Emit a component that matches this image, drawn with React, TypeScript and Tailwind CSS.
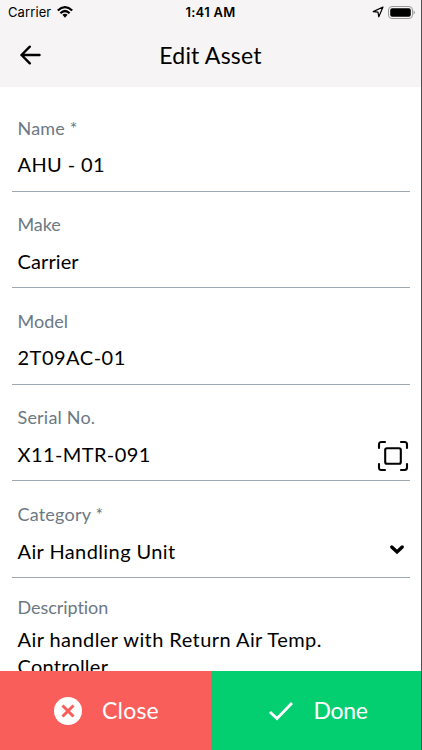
import type { ReactNode } from "react";

type FieldProps = {
  label: string;
  value: string;
  labelClass: string;
  valueClass: string;
  icon?: ReactNode;
};

function Field({ label, value, labelClass, valueClass, icon }: FieldProps) {
  return (
    <div className="h-[96.6px] shrink-0 border-b border-[#9da9b2] pl-1.5 pt-[20.500px]">
      <div className={`h-6 text-[18px] leading-6 text-[#6c7883] ${labelClass}`}>{label}</div>
      <div className="mt-[10.800px] flex h-7 items-center justify-between">
        <span className={`whitespace-nowrap text-[20px] leading-7 text-black ${valueClass}`}>{value}</span>
        {icon}
      </div>
    </div>
  );
}

function ScanIcon() {
  return (
    <svg className="mr-px mt-[3px] h-8 w-8 shrink-0" viewBox="0 0 32 32" fill="none" stroke="black" strokeWidth="2.1" strokeLinecap="round" strokeLinejoin="round">
      <path d="M2 8V4.5Q2 2 4.5 2H8M24 2h3.5Q30 2 30 4.5V8M30 24v3.500Q30 30 27.500 30H24M8 30H4.500Q2 30 2 27.500V24" />
      <rect x="8.200" y="8.200" width="15.600" height="15.600" rx="1.800" />
    </svg>
  );
}

function ChevronIcon() {
  return (
    <svg className="mr-[5px] h-4 w-4 shrink-0" viewBox="0 0 16 16" fill="none" stroke="black" strokeWidth="3.400" strokeLinecap="round" strokeLinejoin="miter">
      <path d="M2.800 4L8 9L13.200 4" />
    </svg>
  );
}

function StatusBar() {
  return (
    <div className="grid h-6 grid-cols-3 items-center font-['Inter',sans-serif] text-[13px] leading-6 text-black">
      <div className="flex items-center gap-[6px] pl-2">
        <span className="tracking-[0.1px]">Carrier</span>
        <svg className="h-3 w-4" viewBox="0 0 16 12" fill="none" stroke="black" strokeWidth="2.200">
          <path d="M0.800 4.500Q8-2.200 15.200 4.500M3.400 7.200Q8 2.800 12.600 7.200" />
          <path d="M5.400 8.800Q8 6.700 10.600 8.800L8 11.800Z" fill="black" stroke="none" />
        </svg>
      </div>
      <div className="text-center font-semibold tracking-[0.300px]">1:41 AM</div>
      <div className="flex items-center justify-end gap-1 pr-[6px]">
        <svg className="h-3 w-3" viewBox="0 0 12 12" fill="none" stroke="black" strokeWidth="1.200" strokeLinejoin="round">
          <path d="M1.200 5.600L11 1L6.800 10.800L6 6.200Z" />
        </svg>
        <svg className="h-[13px] w-[27px]" viewBox="0 0 27 13">
          <rect x="0.500" y="0.500" width="24" height="12" rx="3.500" fill="none" stroke="#99999b" />
          <rect x="2.200" y="2.200" width="20.600" height="8.600" rx="2" />
          <path d="M25.500 4.500Q27 5 27 6.500Q27 8 25.500 8.500Z" fill="#a2a2a4" />
        </svg>
      </div>
    </div>
  );
}

export default function App() {
  return (
    <div className="flex h-[750px] w-[422px] flex-col overflow-hidden border-r border-[#505153] bg-white font-['Lato',sans-serif]">
      <header className="h-[87px] shrink-0 bg-[#f6f4f5]">
        <StatusBar />
        <div className="grid h-[62px] grid-cols-[60px_1fr_60px] items-center">
          <svg className="ml-5 h-5 w-[21px]" viewBox="0 0 21 20" fill="none" stroke="black" strokeWidth="2.400" strokeLinecap="round" strokeLinejoin="round">
            <path d="M19.500 10H1.500M9.800 1.700L1.500 10L9.800 18.300" />
          </svg>
          <h1 className="text-center text-[23px] leading-8 tracking-[0.2px] text-black">Edit Asset</h1>
        </div>
      </header>
      <main className="flex h-[584px] shrink-0 flex-col overflow-hidden px-[11.500px] pt-[8px]">
        <Field label="Name *" value="AHU - 01" labelClass="tracking-[0.2px]" valueClass="tracking-[0.4px]" />
        <Field label="Make" value="Carrier" labelClass="tracking-[-0.100px]" valueClass="tracking-[0.100px]" />
        <Field label="Model" value="2T09AC-01" labelClass="tracking-[0px]" valueClass="tracking-[0.500px]" />
        <Field label="Serial No." value="X11-MTR-091" labelClass="tracking-[0.2px]" valueClass="tracking-[0.4px]" icon={<ScanIcon />} />
        <Field label="Category *" value="Air Handling Unit" labelClass="tracking-[0.2px]" valueClass="tracking-[0.4px]" icon={<ChevronIcon />} />
        <div className="shrink-0 pl-1.5 pt-[17px]">
          <div className="h-6 text-[18px] leading-6 tracking-[-0.050px] text-[#6c7883]">Description</div>
          <p className="pt-[7px] text-[20px] leading-[27.500px] tracking-[0.430px] text-black">
            Air handler with Return Air Temp.
            <br />
            <span className="tracking-[0.250px]">Controller</span>
          </p>
        </div>
      </main>
      <footer className="grid h-[79px] shrink-0 grid-cols-2 text-[23px] text-white">
        <button className="flex items-center bg-[#fa5e5b] pl-[54px]">
          <svg className="h-7 w-7" viewBox="0 0 28 28">
            <circle cx="14" cy="14" r="14" fill="white" />
            <path d="M8.500 8.500L19.500 19.500M19.500 8.500L8.500 19.500" stroke="#fa5e5b" strokeWidth="3" />
          </svg>
          <span className="pl-5 tracking-[0.2px]">Close</span>
        </button>
        <button className="flex items-center bg-[#03ce70] pl-[58px]">
          <svg className="h-5 w-6" viewBox="0 0 24 20" fill="none" stroke="white" strokeWidth="2.800">
            <path d="M1 11L8 17.500L23 2" />
          </svg>
          <span className="pl-[21px] tracking-[-0.300px]">Done</span>
        </button>
      </footer>
    </div>
  );
}
